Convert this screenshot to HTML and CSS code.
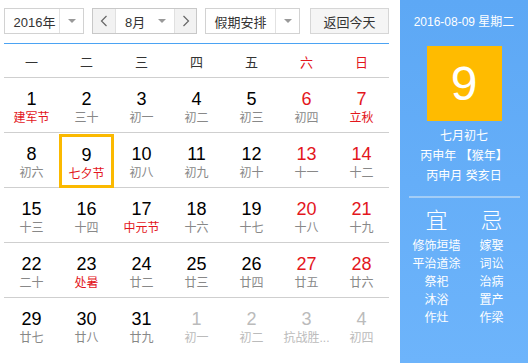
FILE: index.html
```html
<!DOCTYPE html>
<html lang="zh">
<head>
<meta charset="utf-8">
<title>万年历</title>
<link rel="stylesheet" href="styles.css">
</head>
<body>
<div class="cal">
  <div class="main">
    <div class="toolbar">
      <div class="sel sel-year"><span class="sel-text">2016年</span><span class="sel-arrow"><i class="tri"></i></span></div>
      <div class="sel sel-month">
        <span class="nav"><svg width="8" height="12" viewBox="0 0 8 12"><path d="M6.5 1 L1.5 6 L6.5 11" fill="none" stroke="#666" stroke-width="1.2"/></svg></span>
        <span class="sel-text month-text">8月</span><span class="sel-arrow month-arrow"><i class="tri"></i></span>
        <span class="nav nav-r"><svg width="8" height="12" viewBox="0 0 8 12"><path d="M1.5 1 L6.5 6 L1.5 11" fill="none" stroke="#666" stroke-width="1.2"/></svg></span>
      </div>
      <div class="sel sel-hol"><span class="sel-text">假期安排</span><span class="sel-arrow"><i class="tri"></i></span></div>
      <div class="btn-today">返回今天</div>
    </div>
    <div class="weekhead">
      <span>一</span><span>二</span><span>三</span><span>四</span><span>五</span><span class="red">六</span><span class="red">日</span>
    </div>
    <div class="grid">
      <div class="row">
        <div class="day"><b>1</b><em class="fest">建军节</em></div>
        <div class="day"><b>2</b><em>三十</em></div>
        <div class="day"><b>3</b><em>初一</em></div>
        <div class="day"><b>4</b><em>初二</em></div>
        <div class="day"><b>5</b><em>初三</em></div>
        <div class="day wk"><b>6</b><em>初四</em></div>
        <div class="day wk"><b>7</b><em class="fest">立秋</em></div>
      </div>
      <div class="row">
        <div class="day"><b>8</b><em>初六</em></div>
        <div class="day today"><b>9</b><em class="fest">七夕节</em></div>
        <div class="day"><b>10</b><em>初八</em></div>
        <div class="day"><b>11</b><em>初九</em></div>
        <div class="day"><b>12</b><em>初十</em></div>
        <div class="day wk"><b>13</b><em>十一</em></div>
        <div class="day wk"><b>14</b><em>十二</em></div>
      </div>
      <div class="row">
        <div class="day"><b>15</b><em>十三</em></div>
        <div class="day"><b>16</b><em>十四</em></div>
        <div class="day"><b>17</b><em class="fest">中元节</em></div>
        <div class="day"><b>18</b><em>十六</em></div>
        <div class="day"><b>19</b><em>十七</em></div>
        <div class="day wk"><b>20</b><em>十八</em></div>
        <div class="day wk"><b>21</b><em>十九</em></div>
      </div>
      <div class="row">
        <div class="day"><b>22</b><em>二十</em></div>
        <div class="day"><b>23</b><em class="fest">处暑</em></div>
        <div class="day"><b>24</b><em>廿二</em></div>
        <div class="day"><b>25</b><em>廿三</em></div>
        <div class="day"><b>26</b><em>廿四</em></div>
        <div class="day wk"><b>27</b><em>廿五</em></div>
        <div class="day wk"><b>28</b><em>廿六</em></div>
      </div>
      <div class="row last">
        <div class="day"><b>29</b><em>廿七</em></div>
        <div class="day"><b>30</b><em>廿八</em></div>
        <div class="day"><b>31</b><em>廿九</em></div>
        <div class="day other"><b>1</b><em>初一</em></div>
        <div class="day other"><b>2</b><em>初二</em></div>
        <div class="day other"><b>3</b><em>抗战胜...</em></div>
        <div class="day other"><b>4</b><em>初四</em></div>
      </div>
    </div>
  </div>
  <div class="side">
    <div class="side-date">2016-08-09 星期二</div>
    <div class="bigday">9</div>
    <div class="lunar">
      <div>七月初七</div>
      <div>丙申年 【猴年】</div>
      <div>丙申月 癸亥日</div>
    </div>
    <div class="sep"></div>
    <div class="yiji">
      <div class="col">
        <div class="yj-title">宜</div>
        <div>修饰垣墙</div>
        <div>平治道涂</div>
        <div>祭祀</div>
        <div>沐浴</div>
        <div>作灶</div>
      </div>
      <div class="col">
        <div class="yj-title">忌</div>
        <div>嫁娶</div>
        <div>词讼</div>
        <div>治病</div>
        <div>置产</div>
        <div>作梁</div>
      </div>
    </div>
  </div>
</div>
</body>
</html>
```
FILE: styles.css
```css
* { box-sizing: border-box; }
html, body { margin: 0; padding: 0; }
body {
  width: 528px;
  height: 363px;
  overflow: hidden;
  background: #fff;
  font-family: "Liberation Sans", Arial, "Noto Sans CJK SC", sans-serif;
  color: #333;
}
.cal { display: flex; height: 363px; }
.main { width: 400px; padding: 8px 11px 0 4px; }
.toolbar { display: flex; height: 26px; }
.sel {
  display: flex;
  border: 1px solid #d2d2d2;
  height: 26px;
  background: #fff;
  font-size: 13px;
  color: #333;
}
.sel-text { display: flex; align-items: center; justify-content: center; }
.sel-arrow {
  display: flex; align-items: center; justify-content: center;
  width: 24px;
  border-left: 1px solid #e2e2e2;
}
.tri {
  width: 0; height: 0;
  border-left: 4px solid transparent;
  border-right: 4px solid transparent;
  border-top: 4px solid #999;
}
.sel-year { width: 80px; }
.sel-year .sel-text { width: 54px; padding-left: 5px; }
.sel-month { width: 105px; margin-left: 8px; border-color: #c8c8c8; }
.nav {
  width: 22px;
  display: flex; align-items: center; justify-content: center;
  background: #f2f2f2;
}
.nav-r { border-left: 1px solid #e0e0e0; }
.month-text { width: 36px; border-left: 1px solid #e0e0e0; padding-left: 4px; }
.month-arrow { width: 24px; border-left: none; }
.sel-hol { width: 95px; margin-left: 8px; }
.sel-hol .sel-text { width: 70px; }
.btn-today {
  width: 83px;
  margin-left: 10px;
  height: 26px;
  border: 1px solid #d6d6d6;
  background: #f5f5f5;
  font-size: 13px;
  color: #333;
  display: flex; align-items: center; justify-content: center;
}
.weekhead {
  margin-top: 9px;
  border-top: 1px solid #4ba3f3;
  border-bottom: 1px solid #cfcfcf;
  height: 35px;
  display: grid;
  grid-template-columns: repeat(7, 55px);
  align-items: center;
  font-size: 13px;
  color: #333;
}
.weekhead span { text-align: center; padding-top: 1px; }
.weekhead .red { color: #e3161c; }
.row {
  display: grid;
  grid-template-columns: repeat(7, 55px);
  height: 55px;
  border-bottom: 1px solid #cfcfcf;
}
.row.last { border-bottom: none; }
.day {
  display: flex;
  flex-direction: column;
  align-items: center;
  padding-top: 11px;
  height: 54px;
}
.day b {
  font-weight: normal;
  font-size: 18px;
  line-height: 20px;
  color: #000;
}
.day em {
  font-style: normal;
  font-size: 12px;
  line-height: 16px;
  margin-top: 1px;
  color: #888;
  white-space: nowrap;
}
.day em.fest { color: #e3161c; }
.day.wk b { color: #e3161c; }
.day.other b, .day.other em { color: #bbb; }
.day.today {
  border: 3px solid #fbb900;
  padding-top: 8px;
  margin-top: 1px;
  height: 54px;
}
.day.today em { margin-top: 1px; }
.side {
  width: 128px;
  height: 363px;
  background: linear-gradient(#5da8f5, #6db4fb);
  color: #fff;
  display: flex;
  flex-direction: column;
  align-items: center;
}
.side-date { font-size: 12px; margin-top: 14px; line-height: 16px; }
.bigday {
  width: 75px; height: 75px;
  margin-top: 16px;
  background: #ffbb00;
  font-size: 48px;
  line-height: 75px;
  text-align: center;
  font-family: "Liberation Sans", Arial, sans-serif;
}
.lunar { font-size: 12px; text-align: center; margin-top: 5px; }
.lunar div { line-height: 20px; }
.sep {
  width: 111px;
  height: 2px;
  background: #a3cdf6;
  margin-top: 10px;
}
.yiji { display: flex; width: 128px; justify-content: center; margin-top: 11px; }
.col { width: 55px; text-align: center; font-size: 12px; }
.col div { line-height: 18px; }
.col .yj-title { font-size: 22px; line-height: 24px; margin-bottom: 4px; font-weight: 300; }
```
